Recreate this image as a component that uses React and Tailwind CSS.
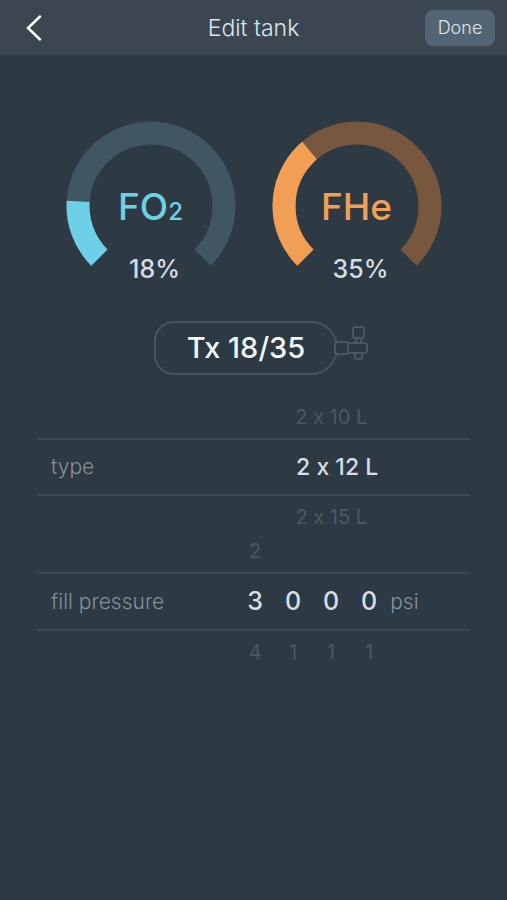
import { useState } from 'react';

const TANK_TYPES = ['2 x 7 L', '2 x 10 L', '2 x 12 L', '2 x 15 L', '2 x 18 L'];

function Header() {
  return (
    <header className="grid h-[55px] grid-cols-[1fr_auto_1fr] items-center bg-[#3b4651] px-3">
      <button type="button" aria-label="Back" className="flex h-11 w-11 items-center justify-center justify-self-start text-white">
        <svg width="18" height="28" viewBox="0 0 18 28" fill="none" stroke="currentColor" strokeWidth="2.5">
          <path d="M15 2.5 3 14l12 11.5" strokeLinecap="round" strokeLinejoin="miter" />
        </svg>
      </button>
      <h1 className="pt-0.5 text-[23px] font-light text-[#dde5ec]">Edit tank</h1>
      <button
        type="button"
        className="h-9 w-[70px] justify-self-end rounded-lg bg-[#536574] text-[18px] font-light text-[#dde5ec]"
      >
        Done
      </button>
    </header>
  );
}

function Gauge({ label, value, trackClass, fillClass, textClass }) {
  const arc = 'M33.4 136.6A73 73 0 1 1 136.6 136.6';

  return (
    <figure className="relative w-[170px]">
      <svg viewBox="0 0 170 170" className="block w-full" fill="none" strokeWidth="23">
        <path d={arc} className={trackClass} />
        <path d={arc} className={fillClass} pathLength="100" strokeDasharray={`${value} 200`} />
      </svg>
      <div className={`absolute inset-x-0 top-[62px] text-center text-[37px] leading-[48px] font-medium ${textClass}`}>
        {label}
      </div>
      <figcaption className="absolute inset-x-0 top-[132px] pl-2 text-center text-[25px] leading-8 font-medium text-[#d5dee6]">
        {value}%
      </figcaption>
    </figure>
  );
}

function Tank({ name }) {
  return (
    <div className="flex items-center justify-center pl-4">
      <div className="flex h-[54px] w-[184px] items-center justify-center rounded-l-[20px] rounded-r-[27px] border-2 border-[#465660] text-[29px] font-medium text-[#f3f8fc]">
        {name}
      </div>
      <svg
        width="35"
        height="44"
        viewBox="0 0 35 44"
        className="-ml-1 mb-1"
        fill="#2d3943"
        stroke="#53626d"
        strokeWidth="1.5"
      >
        <path d="M22 13h5v7h-5z" />
        <rect x="19" y="3" width="11" height="11" rx="2" />
        <rect x="21" y="27" width="7" height="8" rx="2" />
        <rect x="1" y="18" width="14" height="12" rx="3" />
        <rect x="14" y="19" width="19" height="10" rx="2" />
      </svg>
    </div>
  );
}

// neighbour value above or below the selected one
function Ghost({ children, className = '', ...props }) {
  return (
    <button type="button" className={`text-[20px] leading-6 text-[#4b5963] ${className}`} {...props}>
      {children}
    </button>
  );
}

function TypePicker() {
  const [index, setIndex] = useState(2);
  const prev = TANK_TYPES[index - 1];
  const next = TANK_TYPES[index + 1];

  return (
    <section>
      <div className="grid h-[38px] grid-cols-[46%_1fr] items-center pb-1">
        <div className="col-start-2 w-[190px] text-center">
          {prev && <Ghost onClick={() => setIndex(index - 1)}>{prev}</Ghost>}
        </div>
      </div>
      <div className="grid h-[58px] grid-cols-[46%_1fr] items-center border-y-2 border-[#3b4852]">
        <span id="type-label" className="pl-3.5 text-[21px] font-light text-[#84919b]">type</span>
        <output aria-labelledby="type-label" className="w-[202px] text-center text-[23px] font-medium text-[#d5dee6]">
          {TANK_TYPES[index]}
        </output>
      </div>
      <div className="grid h-[38px] grid-cols-[46%_1fr] items-center pt-1">
        <div className="col-start-2 w-[190px] text-center">
          {next && <Ghost onClick={() => setIndex(index + 1)}>{next}</Ghost>}
        </div>
      </div>
    </section>
  );
}

function PressurePicker() {
  const [digits, setDigits] = useState([3, 0, 0, 0]);

  const step = (position, amount) => {
    setDigits(digits.map((d, i) => (i === position ? d + amount : d)));
  };

  return (
    <section>
      <div className="grid h-[38px] grid-cols-[46%_1fr] items-center pb-1">
        <div className="col-start-2 flex">
          {digits.map((d, i) => (
            <div key={i} className="w-[38px] text-center">
              {d > 0 && <Ghost onClick={() => step(i, -1)}>{d - 1}</Ghost>}
            </div>
          ))}
        </div>
      </div>
      <div className="grid h-[59px] grid-cols-[46%_1fr] items-center border-y-2 border-[#3b4852]">
        <span id="pressure-label" className="pl-3.5 text-[21px] font-light text-[#84919b]">fill pressure</span>
        <div className="flex items-center">
          <output aria-labelledby="pressure-label" className="flex">
            {digits.map((d, i) => (
              <span key={i} className="w-[38px] text-center text-[25px] font-medium text-[#d5dee6]">{d}</span>
            ))}
          </output>
          <span className="pl-0.5 text-[21px] font-light text-[#84919b]">psi</span>
        </div>
      </div>
      <div className="grid h-[38px] grid-cols-[46%_1fr] items-center pt-1">
        <div className="col-start-2 flex">
          {digits.map((d, i) => (
            <div key={i} className="w-[38px] text-center">
              {d < 9 && <Ghost onClick={() => step(i, 1)}>{d + 1}</Ghost>}
            </div>
          ))}
        </div>
      </div>
    </section>
  );
}

export default function App() {
  return (
    <div className="min-h-screen bg-[#2d3943] font-['Inter','Liberation_Sans',sans-serif] [font-feature-settings:'calt'_0]">
      <Header />
      <main className="px-[37px] pt-[66px]">
        <div className="flex justify-center gap-9">
          <Gauge
            label={<>FO<span className="text-[24px]">2</span></>}
            value={18}
            trackClass="stroke-[#405763]"
            fillClass="stroke-[#6ed0e6]"
            textClass="text-[#6ed0e6]"
          />
          <Gauge
            label="FHe"
            value={35}
            trackClass="stroke-[#77583f]"
            fillClass="stroke-[#f29f56]"
            textClass="text-[#f29f56]"
          />
        </div>
        <div className="pt-[30px] pb-[25px]">
          <Tank name="Tx 18/35" />
        </div>
        <TypePicker />
        <PressurePicker />
      </main>
    </div>
  );
}
